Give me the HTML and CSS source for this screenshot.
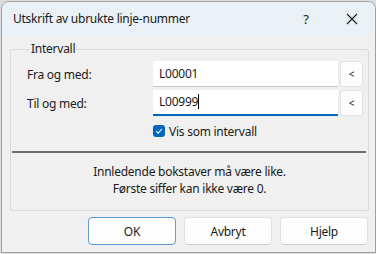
FILE: index.html
```html
<!DOCTYPE html>
<html lang="nb">
<head>
    <meta charset="UTF-8">
    <title>Utskrift av ubrukte linje-nummer</title>
    <link rel="stylesheet" href="styles.css">
</head>
<body>
    <div class="window">
        <div class="titlebar">
            <span class="title">Utskrift av ubrukte linje-nummer</span>
            <div class="caption-buttons">
                <span class="caption-btn">?</span>
                <span class="caption-btn">
                    <svg width="12" height="12" viewBox="0 0 12 12">
                        <path d="M1 1 L11 11 M11 1 L1 11" stroke="#1a1a1a" stroke-width="1.1" fill="none"/>
                    </svg>
                </span>
            </div>
        </div>

        <div class="content">
            <fieldset class="group">
                <legend>Intervall</legend>

                <div class="row">
                    <span class="row-label">Fra og med:</span>
                    <div class="textbox">L00001</div>
                    <div class="pick-btn">&lt;</div>
                </div>

                <div class="row">
                    <span class="row-label">Til og med:</span>
                    <div class="textbox focused">L00999<span class="caret"></span></div>
                    <div class="pick-btn">&lt;</div>
                </div>

                <div class="check-row">
                    <span class="checkbox">
                        <svg width="10" height="10" viewBox="0 0 10 10">
                            <path d="M2.2 5.2 L4.2 7.1 L7.9 3" stroke="#fff" stroke-width="1.1" fill="none"/>
                        </svg>
                    </span>
                    <span>Vis som intervall</span>
                </div>

                <div class="separator"></div>

                <div class="info">
                    <p>Innledende bokstaver må være like.</p>
                    <p>Første siffer kan ikke være 0.</p>
                </div>
            </fieldset>

            <div class="buttons">
                <div class="btn default">OK</div>
                <div class="btn">Avbryt</div>
                <div class="btn">Hjelp</div>
            </div>
        </div>
    </div>
</body>
</html>
```

FILE: styles.css
```css
* {
    margin: 0;
    padding: 0;
    box-sizing: border-box;
}

body {
    font-family: 'Segoe UI', 'Noto Sans', sans-serif;
    font-size: 12px;
    letter-spacing: -0.25px;
    color: #1a1a1a;
    background: #dcdcdc;
    width: 376px;
    height: 254px;
    overflow: hidden;
}

.window {
    margin: 1px 0 0 1px;
    width: 375px;
    height: 252px;
    background: #f0f0f0;
    border: 1px solid #a0a0a0;
    border-radius: 8px 8px 0 0;
    overflow: hidden;
}

.titlebar {
    height: 33px;
    background: #e9f1f6;
    display: flex;
    align-items: center;
    padding-left: 11px;
}

.title {
    flex: 1;
}

.caption-buttons {
    display: flex;
    height: 100%;
}

.caption-btn {
    width: 46px;
    display: flex;
    align-items: center;
    justify-content: center;
    font-size: 13px;
}

.content {
    padding: 6px 6px 0 8px;
}

.group {
    border: 1px solid #dadada;
    border-radius: 2px;
    padding: 4px 0 0 16px;
    height: 170px;
}

.group legend {
    margin-left: 2px;
    padding: 0 2px;
    line-height: 16px;
}

.row {
    display: flex;
    align-items: center;
    height: 26px;
    margin-bottom: 3px;
}

.row-label {
    width: 126px;
}

.textbox {
    width: 185px;
    height: 26px;
    background: #fff;
    border-bottom: 1px solid #c8c8c8;
    padding-left: 6px;
    line-height: 25px;
}

.textbox.focused {
    border-bottom: 2px solid #0067c0;
    line-height: 24px;
}

.caret {
    display: inline-block;
    width: 1px;
    height: 15px;
    background: #000;
    vertical-align: -3px;
}

.pick-btn {
    width: 23px;
    height: 26px;
    margin-left: 2px;
    background: #fdfdfd;
    border: 1px solid #e2e2e2;
    border-radius: 3px;
    font-size: 10px;
    display: flex;
    align-items: center;
    justify-content: center;
}

.check-row {
    display: flex;
    align-items: center;
    gap: 4px;
    margin: 7px 0 0 126px;
    height: 16px;
}

.checkbox {
    width: 12px;
    height: 12px;
    background: #0067c0;
    border-radius: 3px;
    display: flex;
    align-items: center;
    justify-content: center;
}

.separator {
    height: 2px;
    background: #6d6d6d;
    margin: 12px 2px 0 -15px;
}

.info {
    margin: 10px 0 0 -16px;
    text-align: center;
    line-height: 17px;
}

.buttons {
    display: flex;
    justify-content: flex-end;
    gap: 8px;
    margin-top: 6px;
    padding-right: 1px;
}

.btn {
    width: 88px;
    height: 28px;
    background: #fdfdfd;
    border: 1px solid #e0e0e0;
    border-bottom-color: #cfcfcf;
    border-radius: 4px;
    display: flex;
    align-items: center;
    justify-content: center;
}

.btn.default {
    border: 1px solid #5a9ad6;
}
```
